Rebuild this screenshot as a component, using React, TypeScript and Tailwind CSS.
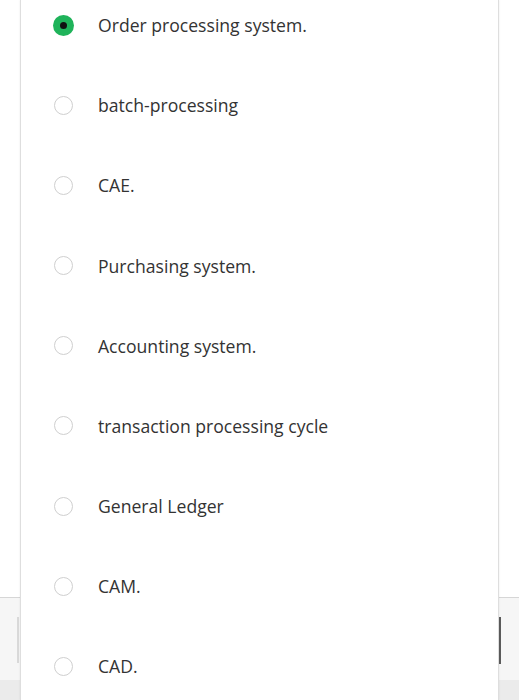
import React from "react";

const options = [
  "Order processing system.",
  "batch-processing",
  "CAE.",
  "Purchasing system.",
  "Accounting system.",
  "transaction processing cycle",
  "General Ledger",
  "CAM.",
  "CAD.",
];

export default function App() {
  const selected = 0;

  return (
    <div
      className="relative h-[700px] w-[519px] overflow-hidden bg-white"
      style={{ fontFamily: '"Open Sans", "Liberation Sans", sans-serif' }}
    >
      {/* page behind the sheet */}
      <div className="flex h-full flex-col">
        <div className="h-[597px] bg-white" />
        <div className="flex flex-1 flex-col border-t border-[#d6d6d6] bg-[#f6f6f6]">
          <div className="flex h-[82px] items-center justify-between px-[17px] pt-[2px]">
            <div className="h-[46px] w-[2px] bg-[#d9d9d9]" />
            <div className="mr-[1px] h-[47px] w-[2px] bg-[#5c5c5c]" />
          </div>
          <div className="flex-1 bg-[#ebebeb]" />
        </div>
      </div>

      {/* answer sheet */}
      <div className="absolute inset-y-0 left-[20px] w-[479px] border-x border-[#dedede] bg-white shadow-[0_0_2px_rgba(0,0,0,0.08)]">
        <ul className="-mt-[14.6px]">
          {options.map((label, i) => (
            <li key={label} className="flex h-[80.1px] items-center">
              <span className="flex w-[77px] justify-center pl-[7px]">
                {i === selected ? (
                  <span className="flex h-[21px] w-[21px] items-center justify-center rounded-full bg-[#1fb35a]">
                    <span className="h-[7px] w-[7px] rounded-full bg-[#111]" />
                  </span>
                ) : (
                  <span className="h-[19px] w-[19px] rounded-full border-[1.5px] border-[#cfcfcf] bg-white" />
                )}
              </span>
              <span className="text-[17.6px] text-[#333333]">{label}</span>
            </li>
          ))}
        </ul>
      </div>
    </div>
  );
}
